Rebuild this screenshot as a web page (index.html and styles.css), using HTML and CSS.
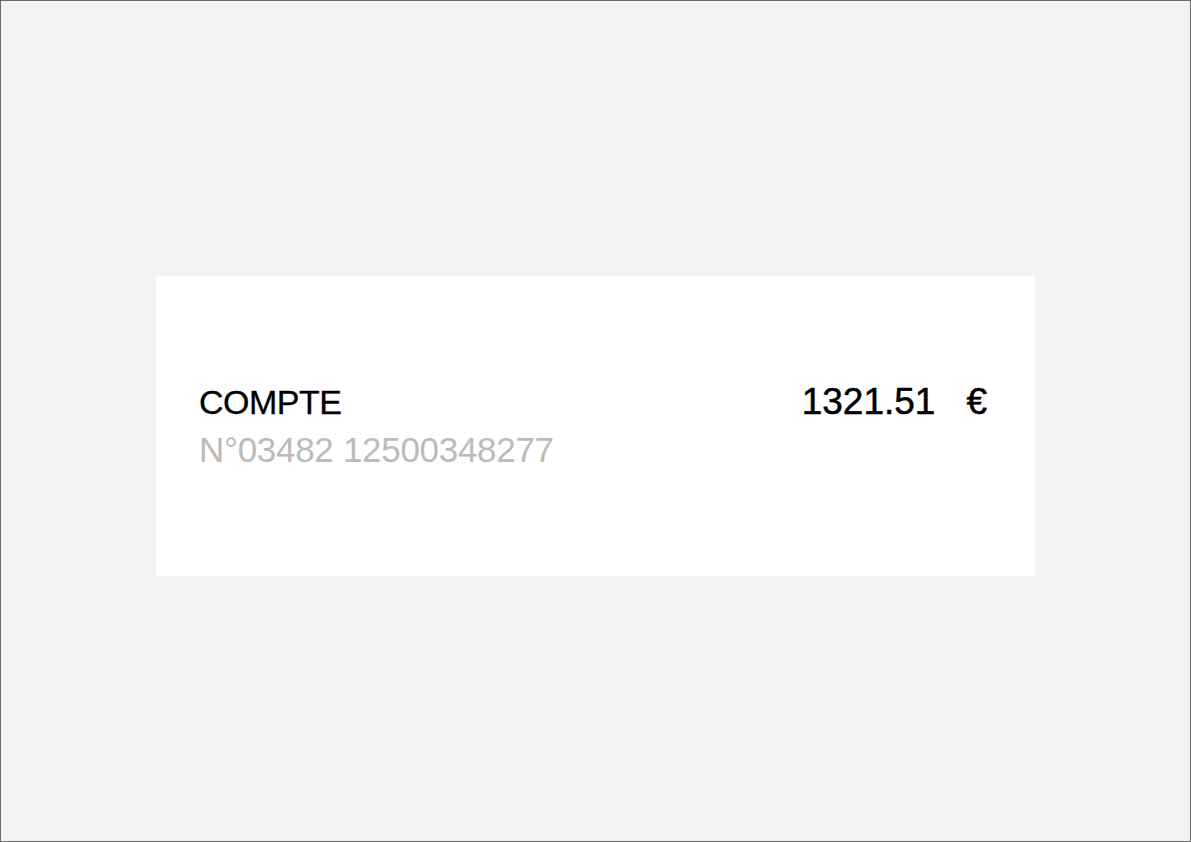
FILE: index.html
```html
<!DOCTYPE html>
<html lang="fr">
<head>
    <meta charset="UTF-8" />
    <meta name="viewport" content="width=device-width, initial-scale=1.0" />
    <title>Compte</title>
    <link rel="stylesheet" href="styles.css">
</head>
<body>
    <div class="card">
        <div class="row">
            <span class="label">COMPTE</span>
            <span class="amount">1321.51<span class="currency">€</span></span>
        </div>
        <div class="number">N°03482 12500348277</div>
    </div>
</body>
</html>
```

FILE: styles.css
```css
html {
    height: 100%;
}
body {
    margin: 0;
    height: 100%;
    box-sizing: border-box;
    border: 1px solid #6b6b6b;
    background-color: #f2f2f2;
    font-family: "Liberation Sans", Arial, sans-serif;
    padding-top: 275px;
}
.card {
    width: 879px;
    height: 300px;
    margin: 0 auto;
    box-sizing: border-box;
    background-color: #fff;
    padding: 0 48px 0 43px;
    display: flex;
    flex-direction: column;
    justify-content: center;
}
.row {
    display: flex;
    justify-content: space-between;
    align-items: baseline;
    line-height: 48px;
}
.label {
    font-size: 34px;
    letter-spacing: -0.5px;
    color: #000;
    -webkit-text-stroke: 0.3px #000;
}
.amount {
    font-size: 37px;
    color: #000;
    -webkit-text-stroke: 0.5px #000;
}
.currency {
    margin-left: 31px;
}
.number {
    font-size: 35px;
    letter-spacing: -0.3px;
    line-height: 48px;
    color: #bdbab8;
}
```
